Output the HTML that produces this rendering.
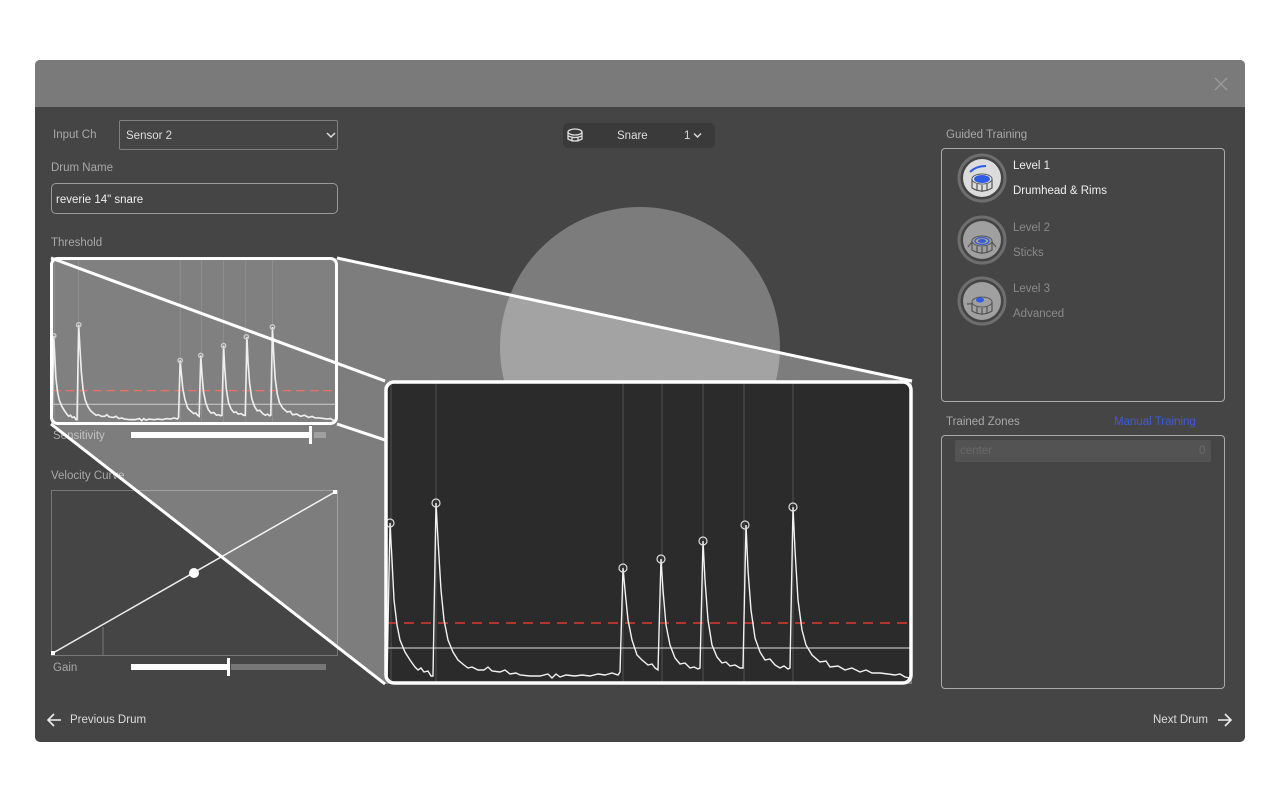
<!DOCTYPE html>
<html><head><meta charset="utf-8"><style>
*{margin:0;padding:0;box-sizing:border-box}
body{width:1280px;height:800px;background:#fff;position:relative;overflow:hidden;font-family:"Liberation Sans",sans-serif}
.panel{position:absolute;left:35px;top:60px;width:1210px;height:682px;background:#454545;border-radius:5px;overflow:hidden}
.hdr{position:absolute;left:0;top:0;width:1210px;height:47px;background:#7a7a7a}
.t{position:absolute;font-size:11.5px;color:#a8a8a8;white-space:nowrap;transform:translateY(1px)}
.w{color:#eee}
.box{position:absolute;border:1px solid #9a9a9a;border-radius:4px}
</style></head><body>
<div class="panel">
<div class="hdr"></div>
</div>
<div class="t" style="left:53px;top:128px">Input Ch</div>
<div class="box" style="left:119px;top:120px;width:219px;height:30px;border-color:#808080;border-radius:2px"></div>
<div class="t w" style="left:126px;top:129px;color:#ddd">Sensor 2</div>
<svg style="position:absolute;left:326px;top:131px" width="10" height="8"><path d="M1 2 L5 6 L9 2" stroke="#ddd" stroke-width="1.5" fill="none"/></svg>
<div class="t" style="left:51px;top:161px">Drum Name</div>
<div class="box" style="left:51px;top:183px;width:287px;height:31px;border-radius:5px"></div>
<div class="t w" style="left:56px;top:193px;color:#eee">reverie 14" snare</div>
<div class="t" style="left:51px;top:236px">Threshold</div>
<div class="t" style="left:53px;top:429px">Sensitivity</div>
<div class="t" style="left:51px;top:469px">Velocity Curve</div>
<div class="t" style="left:53px;top:661px">Gain</div>
<div class="t" style="left:946px;top:128px">Guided Training</div>
<div class="t" style="left:946px;top:415px">Trained Zones</div>
<div class="t" style="left:1114px;top:415px;color:#3b5bdb">Manual Training</div>
<div class="t" style="left:1013px;top:159px;color:#eee">Level 1</div>
<div class="t" style="left:1013px;top:184px;color:#eee">Drumhead &amp; Rims</div>
<div class="t" style="left:1013px;top:221px;color:#8a8a8a">Level 2</div>
<div class="t" style="left:1013px;top:246px;color:#8a8a8a">Sticks</div>
<div class="t" style="left:1013px;top:282px;color:#8a8a8a">Level 3</div>
<div class="t" style="left:1013px;top:307px;color:#8a8a8a">Advanced</div>
<div class="box" style="left:941px;top:148px;width:284px;height:254px;border-color:#aaa"></div>
<div class="box" style="left:941px;top:435px;width:284px;height:254px;border-color:#aaa"></div>
<div style="position:absolute;left:955px;top:440px;width:256px;height:22px;background:#535353;border-radius:2px"></div>
<div class="t" style="left:960px;top:444px;color:#6a6a6a">center</div>
<div class="t" style="left:1199px;top:444px;color:#6a6a6a">0</div>
<div style="position:absolute;left:563px;top:123px;width:152px;height:25px;background:#3a3a3a;border-radius:5px"></div>
<div class="t" style="left:617px;top:129px;color:#ddd">Snare</div>
<div class="t" style="left:684px;top:129px;color:#ddd">1</div>
<svg style="position:absolute;left:693px;top:132px" width="9" height="7"><path d="M1 1.5 L4.5 5 L8 1.5" stroke="#ddd" stroke-width="1.4" fill="none"/></svg>
<svg style="position:absolute;left:565px;top:126px" width="20" height="20" fill="none" stroke="#ddd" stroke-width="1.3"><ellipse cx="10" cy="6" rx="7" ry="3"/><path d="M3 6 V13 Q10 17 17 13 V6 M3 10 Q10 13 17 10 M7 12 V15.5 M13 12 V15.5"/></svg>
<div class="t" style="left:70px;top:713px;color:#ddd">Previous Drum</div>
<div class="t" style="left:1153px;top:713px;color:#ddd">Next Drum</div>
<svg style="position:absolute;left:46px;top:712px" width="16" height="16" fill="none" stroke="#eee" stroke-width="1.6"><path d="M15 8 H2 M8 2 L2 8 L8 14"/></svg>
<svg style="position:absolute;left:1217px;top:712px" width="16" height="16" fill="none" stroke="#eee" stroke-width="1.6"><path d="M1 8 H14 M8 2 L14 8 L8 14"/></svg>
<svg style="position:absolute;left:1214px;top:77px" width="14" height="14" stroke="#999" stroke-width="1.4"><path d="M1 1 L13 13 M13 1 L1 13"/></svg>

<svg style="position:absolute;left:0;top:0" width="1280" height="800">
<defs>
<path id="wave" fill="none" d="M387 680 L390 523 L392 560 L394 600 L397 625 L400 640 L405 652 L410 660 L415 667 L418 670 L421 668 L424 672 L428 671 L431 676 L433 676 L436 503 L438 540 L441 590 L444 620 L448 640 L453 652 L458 660 L464 665 L468 668 L472 667 L478 670 L484 670 L488 667 L492 671 L500 672 L505 670 L510 674 L516 673 L520 675 L530 676 L540 676 L548 674 L552 678 L556 674 L560 677 L566 675 L575 676 L582 675 L590 676 L598 674 L605 675 L612 673 L618 675 L620 672 L623 568 L625 590 L628 620 L632 640 L637 655 L642 660 L648 665 L652 664 L655 668 L658 670 L661 559 L663 590 L666 625 L670 645 L675 658 L680 664 L685 663 L690 668 L694 667 L698 669 L700 668 L703 541 L705 580 L708 620 L712 645 L717 657 L722 663 L726 662 L730 666 L735 665 L740 668 L743 668 L746 525 L748 570 L751 610 L755 638 L760 652 L765 660 L770 659 L775 665 L780 668 L784 666 L788 669 L790 668 L793 507 L795 550 L798 600 L802 630 L806 645 L812 655 L820 662 L826 661 L830 667 L838 666 L845 670 L852 668 L860 672 L866 670 L872 673 L880 673 L888 674 L895 675 L900 674 L905 677 L910 678"/>
<g id="grid" stroke-width="1">
<path d="M391 383V682 M436 383V682 M623 383V682 M662 383V682 M703 383V682 M744 383V682 M793 383V682"/>
</g>
<g id="circ" fill="none"><circle cx="390" cy="523" r="4"/><circle cx="436" cy="503" r="4"/><circle cx="623" cy="568" r="4"/><circle cx="661" cy="559" r="4"/><circle cx="703" cy="541" r="4"/><circle cx="745" cy="525" r="4"/><circle cx="793" cy="507" r="4"/></g>
</defs>
<rect x="51.5" y="490.5" width="286" height="165" fill="none" stroke="#777"/>
<path d="M103 627V655" stroke="#777"/>
<path d="M53 653 L335 492" stroke="#eee" stroke-width="1.5"/>
<circle cx="194" cy="573" r="5" fill="#fff"/>
<rect x="51" y="651" width="4" height="4" fill="#fff"/><rect x="333" y="490" width="4" height="4" fill="#fff"/>
<rect x="131" y="432" width="178" height="6" fill="#fff"/><rect x="314" y="432" width="12" height="6" fill="#777"/><rect x="309" y="426" width="3" height="18" fill="#fff"/>
<rect x="131" y="664" width="97" height="6" fill="#fff"/><rect x="231" y="664" width="95" height="6" fill="#777"/><rect x="227" y="658" width="3" height="18" fill="#fff"/>
<circle cx="640" cy="347" r="140" fill="#7c7c7c"/>
<g stroke="#6e6e6e" stroke-width="3"><circle cx="982" cy="178" r="23" fill="#444"/><circle cx="982" cy="240" r="23" fill="#444"/><circle cx="982" cy="301" r="23" fill="#444"/></g>
<circle cx="982" cy="178" r="19" fill="#dcdcdc"/><circle cx="982" cy="240" r="19" fill="#a0a0a0"/><circle cx="982" cy="301" r="19" fill="#a0a0a0"/>
<g fill="none" stroke="#555" stroke-width="1.2">
<path d="M972 179 V188 Q982 194 992 188 V179 M977 184 V191 M982 185 V192 M987 184 V191"/>
<path d="M972 241 V250 Q982 256 992 250 V241 M977 246 V253 M982 247 V254 M987 246 V253 M968 247 L976 237 M996 247 L988 237"/>
<path d="M972 302 V311 Q982 317 992 311 V302 M977 307 V314 M982 308 V315 M987 307 V314 M967 304 L985 303"/>
</g>
<ellipse cx="982" cy="179" rx="10" ry="5" fill="#eee" stroke="#555"/><ellipse cx="982" cy="179" rx="8" ry="4" fill="#2e5ce6"/>
<path d="M970 172 Q976 166 986 166" stroke="#2e5ce6" stroke-width="2" fill="none"/>
<ellipse cx="982" cy="241" rx="10" ry="5" fill="#a0a0a0" stroke="#555"/><ellipse cx="982" cy="241" rx="7" ry="3.5" fill="none" stroke="#3a5bd0" stroke-width="1.3"/><ellipse cx="982" cy="241" rx="4" ry="2" fill="#3a5bd0"/>
<ellipse cx="982" cy="302" rx="10" ry="5" fill="#a0a0a0" stroke="#555"/><ellipse cx="980" cy="300" rx="4" ry="2.5" fill="#2e5ce6"/>
<polygon points="51,258 337,258 912,381 912,684 385,684 51,424" fill="rgba(255,255,255,0.3)"/>
<rect x="51" y="258" width="286" height="166" rx="6" fill="#808080"/>
<g transform="translate(51 258) scale(0.5427 0.5479) translate(-385 -381)">
<use href="#grid" stroke="#999"/>
<path d="M387 623H910" stroke="#f07060" stroke-width="2.2" stroke-dasharray="16 9"/>
<path d="M387 648H910" stroke="#ccc" stroke-width="1.8"/>
<use href="#wave" stroke="#eee" stroke-width="3"/>
<use href="#circ" stroke="#ccc" stroke-width="2.5"/>
</g>
<rect x="51.5" y="258.5" width="285" height="165" rx="6" fill="none" stroke="#fff" stroke-width="3"/>
<rect x="385" y="381" width="527" height="303" rx="8" fill="#2b2b2b"/>
<use href="#grid" stroke="#505050"/>
<path d="M387 623H910" stroke="#e03a2e" stroke-width="1.6" stroke-dasharray="10 7"/>
<path d="M387 648H910" stroke="#bbb" stroke-width="1.2"/>
<use href="#wave" stroke="#f2f2f2" stroke-width="1.4"/>
<use href="#circ" stroke="#ddd" stroke-width="1.2"/>
<rect x="386" y="382" width="525" height="301" rx="8" fill="none" stroke="#fff" stroke-width="3.5"/>
<g stroke="#fff" stroke-width="3"><path d="M51 258 L385 381 M337 258 L912 381 M51 424 L385 684 M337 424 L385 440"/></g>
</svg>
</body></html>
